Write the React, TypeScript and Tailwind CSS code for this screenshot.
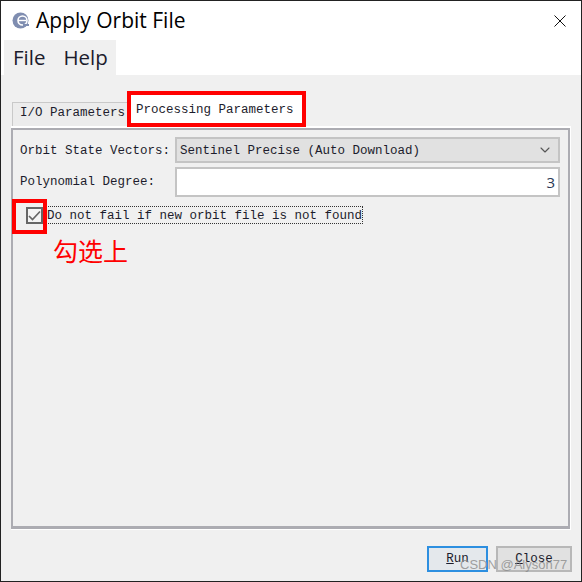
import { ChevronDown } from 'lucide-react';

const MONO = "font-['Liberation_Mono',monospace] text-[12.5px] leading-[16px] text-[#1c1c2c]";

function EsaLogo() {
  return (
    <svg width="17" height="17" viewBox="0 0 17 17" aria-hidden>
      <circle cx="8.5" cy="8.5" r="8" fill="#7f8db0" />
      <circle cx="10.5" cy="8.5" r="4.5" fill="none" stroke="#fff" strokeWidth="1.6" />
      <path d="M6 8.5h8" stroke="#fff" strokeWidth="1.4" />
      <path d="M11 12h6v2h-6z" fill="#7f8db0" />
    </svg>
  );
}

export default function App() {
  return (
    <div className="relative flex h-[582px] w-[582px] flex-col overflow-hidden border border-[#222] bg-[#f0f0f0] font-['Open_Sans',sans-serif]">
      <div className="bg-white">
        <div className="flex h-[39px] items-center pl-[11px] pr-[15px]">
          <EsaLogo />
          <span className="ml-[7px] text-[21px] leading-none text-black">Apply Orbit File</span>
          <svg className="ml-auto" width="12" height="12" viewBox="0 0 12 12" aria-hidden>
            <path d="M.5.5l11 11M11.5.5l-11 11" stroke="#111" strokeWidth="1" fill="none" />
          </svg>
        </div>
        <div className="ml-[3px] flex h-[35px] w-[112px] items-center gap-[18px] bg-[#f0f0f0] pl-[9px] text-[20.5px] text-[#1c1c2c]">
          <span>File</span>
          <span>Help</span>
        </div>
      </div>

      <div className="flex min-h-0 flex-1 flex-col px-[10px] pt-[24px]">
        <div className="flex h-[27px] items-end pl-[1px]">
          <div className={`${MONO} flex h-[24px] w-[116px] items-center whitespace-nowrap border border-b-0 border-[#c9c9c9] bg-[#ececec] pb-[3px] pl-[7px]`}>
            I/O Parameters
          </div>
          <div className={`${MONO} h-[32px] w-[174px] whitespace-nowrap bg-white pl-[8px] pt-[8px]`}>
            Processing Parameters
          </div>
        </div>
        <div className="flex min-h-0 flex-1 flex-col border-b border-r border-t-2 border-white">
          <div className="flex min-h-0 flex-1 flex-col border-2 border-[#acacb2] border-b-[3px] pl-[7px] pr-[8px] pt-[7px]">
            <div className="flex h-[26px] items-center">
              <span className={`${MONO} w-[155px] whitespace-nowrap pt-[2px]`}>Orbit State Vectors:</span>
              <div className={`${MONO} flex h-[26px] flex-1 items-center border-2 border-[#c4c4c4] bg-[#e1e1e1] pl-[3px] pr-[5px]`}>
                <span className="whitespace-nowrap pt-[1px]">Sentinel Precise (Auto Download)</span>
                <ChevronDown className="ml-auto text-[#555]" size={16} strokeWidth={1.6} />
              </div>
            </div>
            <div className="mt-[4px] flex h-[30px] items-center">
              <span className={`${MONO} w-[155px] whitespace-nowrap`}>Polynomial Degree:</span>
              <div className="flex h-[30px] flex-1 items-center justify-end border-2 border-[#c4c4c4] bg-white pr-[3px] font-['Open_Sans',sans-serif] text-[15px] text-[#2b3a55]">
                3
              </div>
            </div>
            <div className="ml-[6px] mt-[9px] flex h-[18px] items-center">
              <div className="flex h-[17px] w-[17px] items-center justify-center border-2 border-[#666] bg-[#f4f4f4]">
                <svg width="13" height="11" viewBox="0 0 13 11" aria-hidden>
                  <path d="M1 6l3.5 3.5L12 1.5" fill="none" stroke="#666" strokeWidth="1.7" />
                </svg>
              </div>
              <span className={`${MONO} ml-[3px] h-[18px] whitespace-nowrap border border-dotted border-[#333] pt-[1px]`}>
                Do not fail if new orbit file is not found
              </span>
            </div>
          </div>
        </div>
        <div className="-mr-px flex h-[51px] items-start justify-end gap-[8px] pt-[16px]">
          <div className={`${MONO} flex h-[26px] w-[61px] items-center justify-center border-2 border-[#2d8fe0] bg-[#e4e8ec]`}>
            <span className="underline">R</span>un
          </div>
          <div className={`${MONO} flex h-[26px] w-[76px] items-center justify-center border-2 border-[#b8b8b8] bg-[#e1e1e1]`}>
            <span className="underline">C</span>lose
          </div>
        </div>
      </div>

      {/* annotations drawn over the screenshot */}
      <div className="absolute left-[126px] top-[90px] h-[36px] w-[179px] border-[4px] border-[#ff0000]" />
      <div className="absolute left-[11px] top-[198px] h-[35px] w-[35px] border-[4px] border-[#ff0000]" />
      <span className="absolute left-[52px] top-[232px] font-['Noto_Sans_CJK_SC',sans-serif] text-[25px] leading-[34px] text-[#ff0000]">
        勾选上
      </span>
      <span className="absolute left-[459px] top-[557px] font-['Liberation_Sans',sans-serif] text-[13px] leading-none text-[#8a8a8a]/80">
        CSDN @Alyson77
      </span>
    </div>
  );
}
